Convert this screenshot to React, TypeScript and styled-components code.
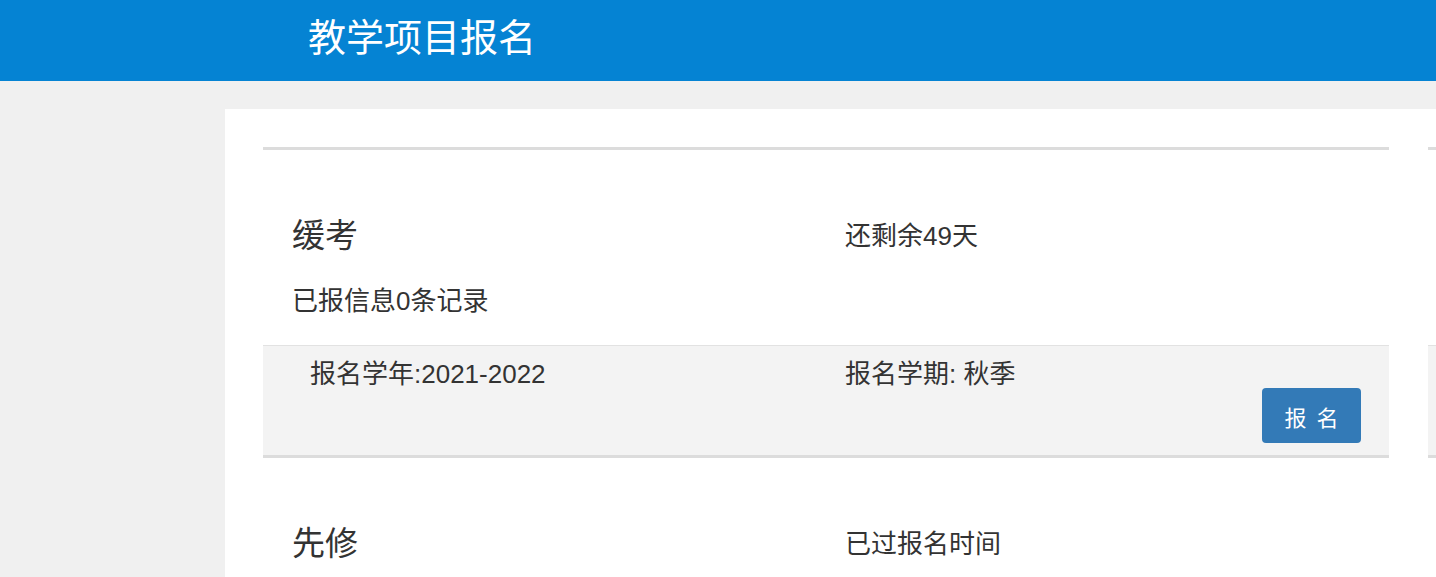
import React from 'react';
import styled, { createGlobalStyle } from 'styled-components';

/* ================================
              Types
================================ */
interface IProject {
    name: string,
    status: string,
    records?: string,
    year?: string,
    term?: string,
    action?: string,
}

interface IProjectCardProps {
    projects: IProject[],
}

/* ================================
               Styles
================================ */
const GlobalStyle = createGlobalStyle`
    html, body {
        margin: 0;
        padding: 0;
        background-color: #f0f0f0;
        overflow: hidden;
        font-family: "Liberation Sans", "Noto Sans CJK SC", sans-serif;
        color: #333;
    }
`;

const Header = styled.header`
    height: 81px;
    background-color: #0583d3;
    display: flex;
    align-items: center;
    padding-left: 308px;
`;

const HeaderTitle = styled.h1`
    margin: 0;
    font-weight: 400;
    font-size: 38px;
    color: #fff;
    line-height: 1;
    padding-bottom: 6px;
`;

const Body = styled.div`
    display: flex;
    padding-top: 28px;
    padding-left: 225px;
`;

const Panel = styled.main`
    flex: 1;
    min-width: 0;
    background-color: #fff;
    padding: 38px 0 0 38px;
    display: flex;
    gap: 39px;
    overflow: hidden;
    height: 600px;
`;

const Card = styled.section`
    flex: 0 0 1126px;
    border-top: 3px solid #dcdcdc;
`;

const InfoRow = styled.div<{ top: number }>`
    display: grid;
    grid-template-columns: 553px 1fr;
    padding-left: 29px;
    padding-top: ${(props) => props.top}px;
    align-items: center;
`;

const ProjectName = styled.h3`
    margin: 0;
    font-weight: 400;
    font-size: 33px;
    line-height: 40px;
    min-height: 40px;
`;

const Text = styled.div`
    font-size: 26px;
    line-height: 30px;
    min-height: 30px;
    white-space: nowrap;
`;

const Records = styled(Text)`
    padding: 30px 0 29px 29px;
`;

const Band = styled.div`
    background-color: #f3f3f3;
    border-top: 1px solid #e2e2e2;
    border-bottom: 3px solid #dcdcdc;
    padding: 15px 28px 12px 47px;
`;

const BandRow = styled.div`
    display: grid;
    grid-template-columns: 535px 1fr;
    font-size: 26px;
    line-height: 27px;
    min-height: 27px;
    white-space: nowrap;
`;

const Actions = styled.div`
    display: flex;
    justify-content: flex-end;
`;

const SignButton = styled.button<{ hidden?: boolean }>`
    width: 99px;
    height: 55px;
    border: none;
    border-radius: 4px;
    background-color: #337ab7;
    color: #fff;
    font-family: "Noto Sans CJK SC", sans-serif;
    font-size: 22px;
    letter-spacing: 10px;
    padding: 0 0 0 10px;
    cursor: pointer;
`;

/* ================================
              Data
================================ */
const projects: IProject[] = [
    {
        name: '缓考',
        status: '还剩余49天',
        records: '已报信息0条记录',
        year: '报名学年:2021-2022',
        term: '报名学期: 秋季',
        action: '报名',
    },
    { name: '先修', status: '已过报名时间' },
];

// the next card only peeks in at the right edge, nothing of its text shows
const nextProjects: IProject[] = [
    { name: '', status: '', records: '', year: '', term: '', action: '' },
    { name: '', status: '' },
];

/* ================================
              Main
================================ */
function ProjectCard(props: IProjectCardProps) {
    return (
        <Card>
            {props.projects.map((project, i) => (
                <React.Fragment key={i}>
                    <InfoRow top={66}>
                        <ProjectName>{project.name}</ProjectName>
                        <Text>{project.status}</Text>
                    </InfoRow>
                    {project.year !== undefined && (
                        <>
                            <Records>{project.records}</Records>
                            <Band>
                                <BandRow>
                                    <div>{project.year}</div>
                                    <div>{project.term}</div>
                                </BandRow>
                                <Actions>
                                    <SignButton>{project.action}</SignButton>
                                </Actions>
                            </Band>
                        </>
                    )}
                </React.Fragment>
            ))}
        </Card>
    );
}

export default function App() {
    return (
        <>
            <GlobalStyle />
            <Header>
                <HeaderTitle>教学项目报名</HeaderTitle>
            </Header>
            <Body>
                <Panel>
                    <ProjectCard projects={projects} />
                    <ProjectCard projects={nextProjects} />
                </Panel>
            </Body>
        </>
    );
}
